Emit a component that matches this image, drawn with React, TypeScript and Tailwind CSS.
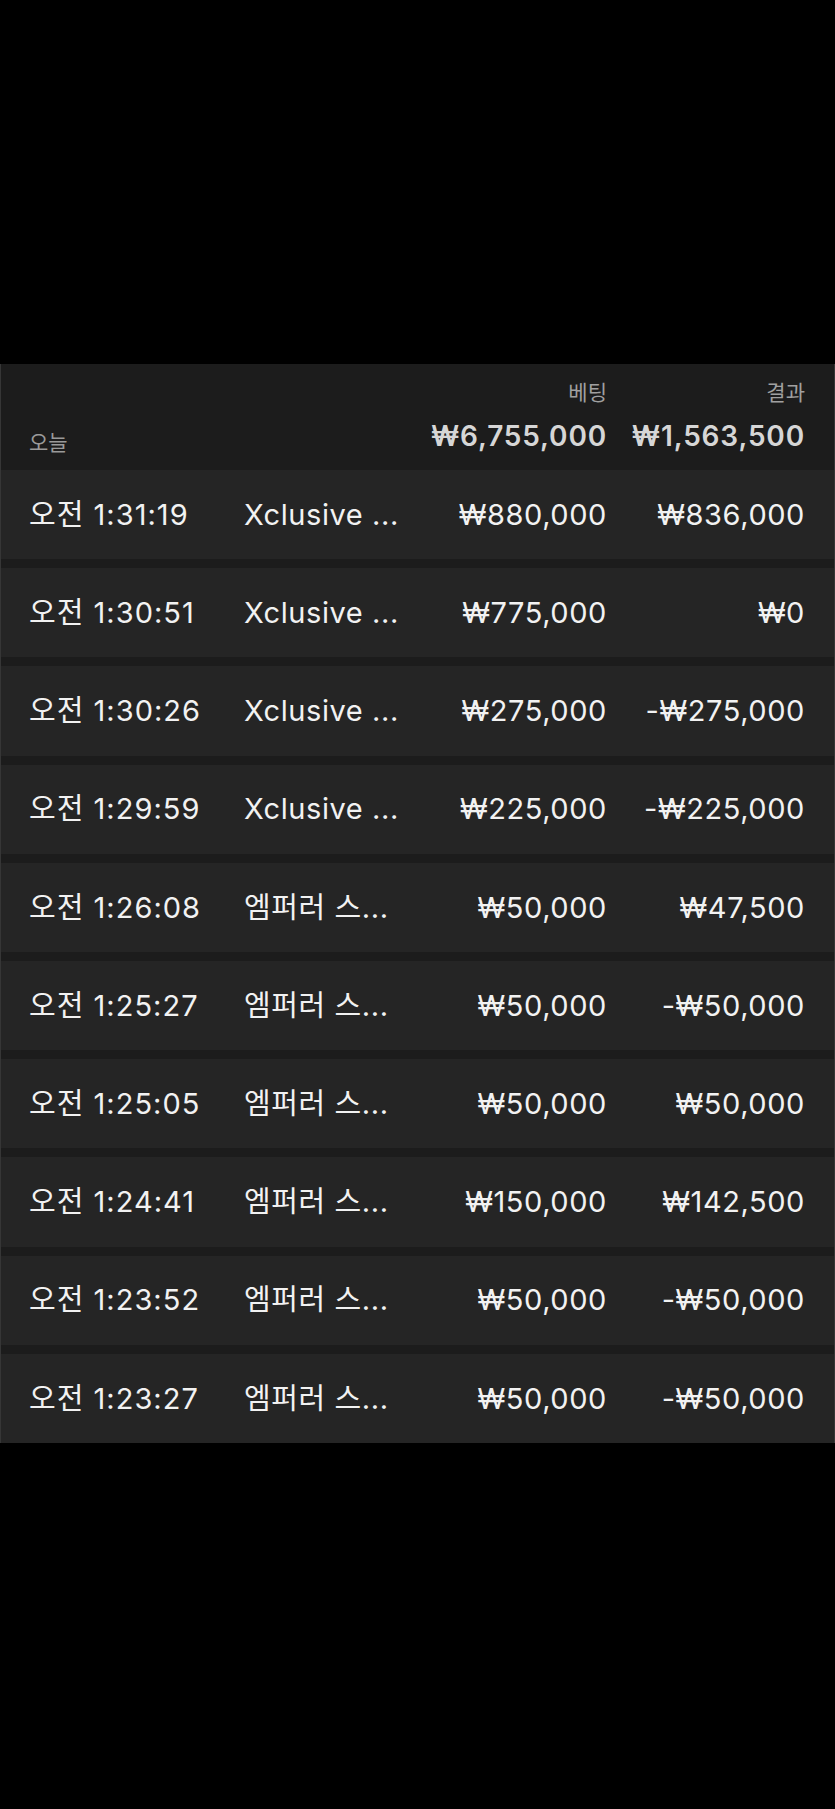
import React from 'react';

interface Bet {
  time: string;
  game: string;
  stake: string;
  result: string;
}

const bets: Bet[] = [
  { time: '오전 1:31:19', game: 'Xclusive ...', stake: '₩880,000', result: '₩836,000' },
  { time: '오전 1:30:51', game: 'Xclusive ...', stake: '₩775,000', result: '₩0' },
  { time: '오전 1:30:26', game: 'Xclusive ...', stake: '₩275,000', result: '-₩275,000' },
  { time: '오전 1:29:59', game: 'Xclusive ...', stake: '₩225,000', result: '-₩225,000' },
  { time: '오전 1:26:08', game: '엠퍼러 스...', stake: '₩50,000', result: '₩47,500' },
  { time: '오전 1:25:27', game: '엠퍼러 스...', stake: '₩50,000', result: '-₩50,000' },
  { time: '오전 1:25:05', game: '엠퍼러 스...', stake: '₩50,000', result: '₩50,000' },
  { time: '오전 1:24:41', game: '엠퍼러 스...', stake: '₩150,000', result: '₩142,500' },
  { time: '오전 1:23:52', game: '엠퍼러 스...', stake: '₩50,000', result: '-₩50,000' },
  { time: '오전 1:23:27', game: '엠퍼러 스...', stake: '₩50,000', result: '-₩50,000' },
];

const font = { fontFamily: 'Inter, "Noto Sans CJK KR", sans-serif' };

const App: React.FC = () => {
  return (
    <div className="min-h-[1809px] w-[835px] bg-black pt-[364px]" style={font}>
      <div className="border-x border-[#363636] bg-[#1c1c1c]">
        {/* Summary header */}
        <div className="grid h-[106px] grid-cols-[215px_1fr_198px] pl-[28px] pr-[29px]">
          <div className="self-end pb-[17px] text-[21px] leading-none text-[#9a9a9a]">오늘</div>
          <div className="flex flex-col items-end justify-end pb-[20px]">
            <span className="text-[21px] leading-none text-[#a0a0a0]">베팅</span>
            <span className="mt-[19px] text-[28px] font-semibold leading-none tracking-[0.03em] text-[#d6d6d6]">₩6,755,000</span>
          </div>
          <div className="flex flex-col items-end justify-end pb-[20px]">
            <span className="text-[21px] leading-none text-[#a0a0a0]">결과</span>
            <span className="mt-[19px] text-[28px] font-semibold leading-none tracking-[0.03em] text-[#d6d6d6]">₩1,563,500</span>
          </div>
        </div>

        {/* Bet rows */}
        <div className="flex flex-col gap-[9px]">
          {bets.map((b, i) => (
            <div
              key={i}
              className="grid h-[89.2px] grid-cols-[215px_150px_1fr_198px] items-center bg-[#252525] pl-[28px] pr-[29px] text-[29px] tracking-[0.02em] text-[#f2f2f2]"
            >
              <span className="whitespace-nowrap tracking-[0.035em]">{b.time}</span>
              <span className="whitespace-nowrap">{b.game}</span>
              <span className="text-right">{b.stake}</span>
              <span className="text-right">{b.result}</span>
            </div>
          ))}
        </div>
      </div>
    </div>
  );
};

export default App;
